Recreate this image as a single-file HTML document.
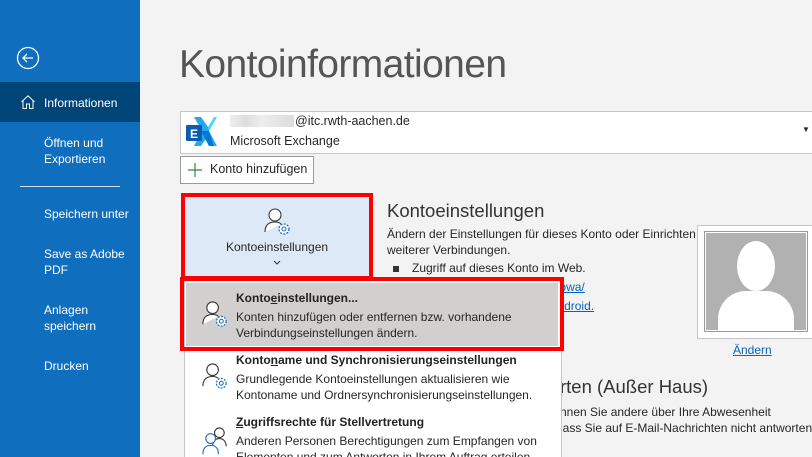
<!DOCTYPE html>
<html><head><meta charset="utf-8"><style>
*{margin:0;padding:0;box-sizing:border-box}
html,body{width:812px;height:457px;overflow:hidden}
body{background:#f3f3f3;font-family:"Liberation Sans",sans-serif;font-size:12px;color:#262626;position:relative}
.a{position:absolute;white-space:nowrap}
#side{position:absolute;left:0;top:0;width:140px;height:457px;background:#106ebe;color:#fff}
#side .a{left:44px;line-height:16px;font-size:12px}
.lnk{color:#0563c1;text-decoration:underline}
.mi .t{font-weight:bold;color:#222}
</style></head><body>
<div id="side">
 <svg class="a" style="left:16px;top:46px" width="24" height="24" viewBox="0 0 24 24"><circle cx="12" cy="12" r="10.5" fill="none" stroke="#fff" stroke-width="1.3"/><path d="M17 12H7M11 8l-4 4 4 4" fill="none" stroke="#fff" stroke-width="1.3"/></svg>
 <div class="a" style="left:0;top:82px;width:140px;height:40px;background:#004578"></div>
 <svg class="a" style="left:20px;top:94px" width="16" height="16" viewBox="0 0 16 16"><path d="M1.5 8L8 1.8 14.5 8M3 6.5V14.5h3.5V10h3v4.5H13V6.5" fill="none" stroke="#fff" stroke-width="1"/></svg>
 <div class="a" style="top:95px">Informationen</div>
 <div class="a" style="top:135px">Öffnen und<br>Exportieren</div>
 <div class="a" style="left:20px;top:186px;width:100px;height:1px;background:#d0e2f4"></div>
 <div class="a" style="top:206px">Speichern unter</div>
 <div class="a" style="top:246px">Save as Adobe<br>PDF</div>
 <div class="a" style="top:302px">Anlagen<br>speichern</div>
 <div class="a" style="top:358px">Drucken</div>
</div>
<div class="a" style="left:179px;top:43px;font-size:39px;color:#555;letter-spacing:-0.6px">Kontoinformationen</div>
<div class="a" style="left:180px;top:111px;width:640px;height:43px;background:#fff;border:1px solid #c6c6c6"></div>
<svg class="a" style="left:184px;top:115px" width="34" height="34" viewBox="0 0 34 34"><path d="M10 2h7l7 10 6-10h3l-8 14 8 15h-3l-6-10-7 10H10l8-15z" fill="#28a8ea"/><path d="M24 12l6-10h3l-8 14z" fill="#50d9ff"/><path d="M17 16l8 15h5l-5-15z" fill="#0078d4"/><rect x="2" y="10" width="16" height="16" rx="1" fill="#0a5cad"/><text x="10" y="23" font-size="12" font-weight="bold" fill="#fff" text-anchor="middle" font-family="Liberation Sans">E</text></svg>
<div class="a" style="left:230px;top:115px;width:64px;height:12px;background:linear-gradient(90deg,#eee,#ddd,#eee,#e4e4e4,#ddd)"></div>
<div class="a" style="left:295px;top:114px;font-size:12.5px">@itc.rwth-aachen.de</div>
<div class="a" style="left:230px;top:134px;font-size:12.5px">Microsoft Exchange</div>
<div class="a" style="left:802px;top:125px;font-size:8px">▼</div>
<div class="a" style="left:180px;top:156px;width:134px;height:28px;background:#fff;border:1px solid #9a9a9a"></div>
<svg class="a" style="left:188px;top:163px" width="14" height="14"><path d="M7 0v14M0 7h14" stroke="#2e8b3a" stroke-width="1.2"/></svg>
<div class="a" style="left:210px;top:162px;font-size:12.5px">Konto hinzufügen</div>

<div class="a" style="left:387px;top:200px;font-size:18.5px;color:#333">Kontoeinstellungen</div>
<div class="a" style="left:387px;top:226px;line-height:16px">Ändern der Einstellungen für dieses Konto oder Einrichten<br>weiterer Verbindungen.</div>
<div class="a" style="left:393px;top:266px;width:6px;height:6px;background:#333"></div>
<div class="a" style="left:412px;top:261px">Zugriff auf dieses Konto im Web.</div>
<div class="a lnk" style="left:412px;top:280px">https://mail.rwth-aachen.de/owa/</div>
<div class="a lnk" style="left:412px;top:299px">Outlook-App für iOS oder Android.</div>
<div class="a" style="left:697px;top:225px;width:120px;height:114px;background:#fff;border:1px solid #c6c6c6"></div>
<div class="a" style="left:704px;top:231px;width:104px;height:101px;border:1px solid #9a9a9a;background:#fff;padding:1px"><div style="position:relative;width:100px;height:97px;background:#b1b1b1;overflow:hidden">
 <div class="a" style="left:31px;top:8px;width:38px;height:50px;border-radius:50%;background:#fff"></div>
 <div class="a" style="left:12px;top:58px;width:76px;height:60px;border-radius:28px 28px 0 0;background:#fff"></div>
</div></div>
<div class="a lnk" style="left:733px;top:343px">Ändern</div>
<div class="a" style="left:560px;top:376px;font-size:18.5px;color:#333">rten (Außer Haus)</div>
<div class="a" style="left:560px;top:404px;line-height:16px">nnen Sie andere über Ihre Abwesenheit<br>lass Sie auf E-Mail-Nachrichten nicht antworten</div>

<div class="a" style="left:181px;top:193px;width:192px;height:87px;border:4px solid #f00;background:#dde9f6"></div>
<svg class="a" style="left:262px;top:206px" width="32" height="32" viewBox="0 0 32 32"><circle cx="13" cy="9" r="6" fill="#fff" stroke="#333" stroke-width="1.1"/><path d="M3 26c0-7 4-10 10-10 3 0 5 1 6 2" fill="#fff" stroke="#333" stroke-width="1.1"/><circle cx="22" cy="23" r="5" fill="#fff" stroke="#1f6fc5" stroke-width="1.3" stroke-dasharray="2 1.3"/><circle cx="22" cy="23" r="2" fill="none" stroke="#1f6fc5" stroke-width="1.1"/></svg>
<div class="a" style="left:185px;top:240px;width:184px;text-align:center">Kontoeinstellungen</div>
<svg class="a" style="left:273px;top:260px" width="8" height="5"><path d="M1 1l3 3 3-3" fill="none" stroke="#333" stroke-width="1"/></svg>

<div class="a" style="left:184px;top:280px;width:378px;height:180px;background:#fff;border:1px solid #c6c6c6"></div>
<div class="a" style="left:180px;top:277px;width:384px;height:74px;border:4px solid #f00"></div>
<div class="a" style="left:186px;top:283px;width:372px;height:63px;background:#d1d0ce"></div>
<div class="mi">
<svg class="a" style="left:200px;top:299px" width="31" height="31" viewBox="0 0 32 32"><circle cx="13" cy="9" r="6" fill="#fff" stroke="#333" stroke-width="1.1"/><path d="M3 26c0-7 4-10 10-10 3 0 5 1 6 2" fill="#fff" stroke="#333" stroke-width="1.1"/><circle cx="22" cy="23" r="5" fill="#fff" stroke="#1f6fc5" stroke-width="1.3" stroke-dasharray="2 1.3"/><circle cx="22" cy="23" r="2" fill="none" stroke="#1f6fc5" stroke-width="1.1"/></svg>
<div class="a t" style="left:236px;top:291px">Konto<u>e</u>instellungen...</div>
<div class="a" style="left:236px;top:309px;line-height:16px">Konten hinzufügen oder entfernen bzw. vorhandene<br>Verbindungseinstellungen ändern.</div>
<svg class="a" style="left:200px;top:361px" width="31" height="31" viewBox="0 0 32 32"><circle cx="13" cy="9" r="6" fill="#fff" stroke="#333" stroke-width="1.1"/><path d="M3 26c0-7 4-10 10-10 3 0 5 1 6 2" fill="#fff" stroke="#333" stroke-width="1.1"/><circle cx="22" cy="23" r="5" fill="#fff" stroke="#1f6fc5" stroke-width="1.3" stroke-dasharray="2 1.3"/><circle cx="22" cy="23" r="2" fill="none" stroke="#1f6fc5" stroke-width="1.1"/></svg>
<div class="a t" style="left:236px;top:353px">Konto<u>n</u>ame und Synchronisierungseinstellungen</div>
<div class="a" style="left:236px;top:371px;line-height:16px">Grundlegende Kontoeinstellungen aktualisieren wie<br>Kontoname und Ordnersynchronisierungseinstellungen.</div>
<svg class="a" style="left:200px;top:425px" width="31" height="31" viewBox="0 0 32 32"><circle cx="20" cy="8" r="5" fill="#fff" stroke="#333" stroke-width="1.1"/><path d="M13 22c0-5 3-8 7-8s7 3 7 8" fill="none" stroke="#333" stroke-width="1.1"/><circle cx="11" cy="14" r="5" fill="#fff" stroke="#1f6fc5" stroke-width="1.2"/><path d="M3 30c0-6 3-9 8-9s8 3 8 9" fill="#fff" stroke="#1f6fc5" stroke-width="1.2"/></svg>
<div class="a t" style="left:236px;top:415px"><u>Z</u>ugriffsrechte für Stellvertretung</div>
<div class="a" style="left:236px;top:433px;line-height:16px">Anderen Personen Berechtigungen zum Empfangen von<br>Elementen und zum Antworten in Ihrem Auftrag erteilen.</div>
</div>
</body></html>
